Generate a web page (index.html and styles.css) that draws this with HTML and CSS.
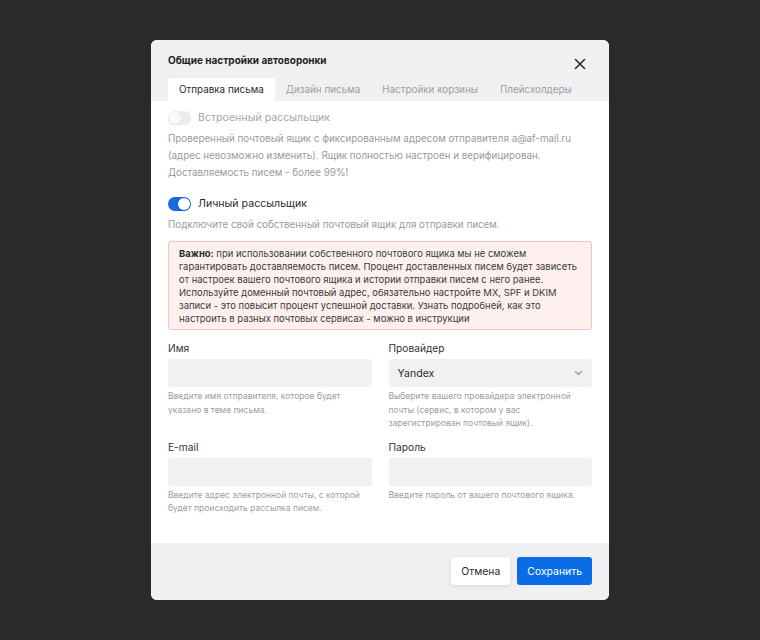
FILE: index.html
```html
<!DOCTYPE html>
<html lang="ru">
<head>
    <meta charset="UTF-8">
    <meta name="viewport" content="width=device-width, initial-scale=1.0">
    <title>Общие настройки автоворонки</title>
    <link rel="stylesheet" href="styles.css">
</head>
<body>
    <div class="modal">
        <header class="modal-header">
            <div class="title-row">
                <h1>Общие настройки автоворонки</h1>
                <button class="close" aria-label="Закрыть">
                    <svg width="12" height="12" viewBox="0 0 12 12"><path d="M1.5 1.5l9 9M10.5 1.5l-9 9" stroke="#2b2b2b" stroke-width="1.6" stroke-linecap="round"/></svg>
                </button>
            </div>
            <nav class="tabs">
                <a class="tab active" href="#">Отправка письма</a>
                <a class="tab" href="#">Дизайн письма</a>
                <a class="tab" href="#">Настройки корзины</a>
                <a class="tab" href="#">Плейсхолдеры</a>
            </nav>
        </header>

        <section class="modal-body">
            <div class="switch-row disabled">
                <span class="switch"><span class="knob"></span></span>
                <span>Встроенный рассыльщик</span>
            </div>
            <p class="desc">Проверенный почтовый ящик с фиксированным адресом отправителя a@af-mail.ru (адрес невозможно изменить). Ящик полностью настроен и верифицирован. Доставляемость писем - более 99%!</p>

            <div class="switch-row second">
                <span class="switch on"><span class="knob"></span></span>
                <span>Личный рассыльщик</span>
            </div>
            <p class="desc">Подключите свой собственный почтовый ящик для отправки писем.</p>

            <p class="warning"><b>Важно:</b> при использовании собственного почтового ящика мы не сможем гарантировать доставляемость писем. Процент доставленных писем будет зависеть от настроек вашего почтового ящика и истории отправки писем с него ранее. Используйте доменный почтовый адрес, обязательно настройте MX, SPF и DKIM записи - это повысит процент успешной доставки. Узнать подробней, как это настроить в разных почтовых сервисах - можно в инструкции</p>

            <div class="form-grid">
                <div class="field">
                    <label>Имя</label>
                    <input type="text">
                    <p class="hint">Введите имя отправителя, которое будет указано в теме письма.</p>
                </div>
                <div class="field">
                    <label>Провайдер</label>
                    <div class="select">
                        <span>Yandex</span>
                        <svg width="9" height="6" viewBox="0 0 9 6"><path d="M1.5 1.5l3 3 3-3" fill="none" stroke="#9a9a9a" stroke-width="1.4" stroke-linecap="round" stroke-linejoin="round"/></svg>
                    </div>
                    <p class="hint">Выберите вашего провайдера электронной почты (сервис, в котором у вас зарегистрирован почтовый ящик).</p>
                </div>
                <div class="field">
                    <label>E-mail</label>
                    <input type="text">
                    <p class="hint">Введите адрес электронной почты, с которой будет происходить рассылка писем.</p>
                </div>
                <div class="field">
                    <label>Пароль</label>
                    <input type="password">
                    <p class="hint">Введите пароль от вашего почтового ящика.</p>
                </div>
            </div>
        </section>

        <footer class="modal-footer">
            <button class="btn btn-light">Отмена</button>
            <button class="btn btn-primary">Сохранить</button>
        </footer>
    </div>
</body>
</html>
```

FILE: styles.css
```css
body {
    margin: 0;
    height: 640px;
    background-color: #2a2a2a;
    font-family: Inter, "Noto Sans", sans-serif;
    display: flex;
    align-items: center;
    justify-content: center;
}

.modal {
    width: 458px;
    height: 560px;
    background-color: #fff;
    border-radius: 6px;
    overflow: hidden;
    display: flex;
    flex-direction: column;
}

.modal-header {
    background-color: #f0f0f2;
    padding: 12px 17px 0;
}

.title-row {
    display: flex;
    justify-content: space-between;
    align-items: flex-start;
}

.title-row h1 {
    margin: 0;
    font-size: 10px;
    line-height: 16px;
    font-weight: 700;
    color: #1f1f1f;
}

.close {
    border: none;
    background: none;
    padding: 0;
    margin: 6px 6px 0 0;
    width: 12px;
    height: 12px;
    display: flex;
    cursor: pointer;
}

.tabs {
    display: flex;
    margin-top: 8px;
}

.tab {
    padding: 0 11px;
    height: 23px;
    line-height: 23px;
    font-size: 9.85px;
    white-space: nowrap;
    color: #9d9d9d;
    text-decoration: none;
    border-radius: 3px 3px 0 0;
}

.tab.active {
    background-color: #fff;
    color: #2b2b2b;
}

.modal-body {
    flex: 1;
    padding: 8px 17px 0;
}

.switch-row {
    display: flex;
    align-items: center;
    gap: 7px;
    font-size: 10.6px;
    line-height: 17px;
    color: #2b2b2b;
}

.switch-row.disabled {
    color: #a5a5a5;
}

.switch-row.second {
    margin-top: 14px;
}

.switch {
    width: 23px;
    height: 14px;
    border-radius: 7px;
    background-color: #ececec;
    position: relative;
    flex-shrink: 0;
}

.switch .knob {
    position: absolute;
    top: 1px;
    left: 1px;
    width: 12px;
    height: 12px;
    border-radius: 50%;
    background-color: #fafafa;
    box-shadow: 0 1px 2px rgba(0, 0, 0, 0.08);
}

.switch.on {
    background-color: #1769e0;
}

.switch.on .knob {
    left: 10px;
    background-color: #fff;
}

.desc {
    margin: 4px 0 0;
    font-size: 9.8px;
    line-height: 17px;
    color: #9a9a9a;
}

.warning {
    margin: 8px 0 0;
    padding: 5px 8px 4px 10px;
    background-color: #fdf0ef;
    border: 1.5px solid #f3c1bf;
    border-radius: 3px;
    font-size: 9.45px;
    line-height: 13px;
    color: #3b3b3b;
}

.warning b {
    font-weight: 700;
    color: #2b2b2b;
}

.form-grid {
    display: grid;
    grid-template-columns: 1fr 1fr;
    column-gap: 17px;
    row-gap: 8px;
    margin-top: 10px;
}

.field label {
    display: block;
    font-size: 10.2px;
    line-height: 16px;
    color: #333;
}

.field input,
.select {
    display: block;
    box-sizing: border-box;
    width: 100%;
    height: 28px;
    margin-top: 3px;
    border: none;
    border-radius: 3px;
    background-color: #f1f1f2;
    font-family: inherit;
    outline: none;
}

.select {
    display: flex;
    align-items: center;
    justify-content: space-between;
    padding: 0 9px 0 9px;
    font-size: 10.6px;
    color: #2b2b2b;
}

.hint {
    margin: 3px 0 0;
    font-size: 8.5px;
    line-height: 13.5px;
    color: #9d9d9d;
}

.modal-footer {
    background-color: #f0f0f2;
    height: 57px;
    box-sizing: border-box;
    padding: 14px 17px;
    display: flex;
    justify-content: flex-end;
    gap: 7px;
}

.btn {
    height: 28px;
    border: none;
    border-radius: 3px;
    font-family: inherit;
    font-size: 10.4px;
    padding: 0 10px;
    cursor: pointer;
}

.btn-light {
    background-color: #fff;
    color: #2b2b2b;
    box-shadow: 0 1px 4px rgba(0, 0, 0, 0.1);
}

.btn-primary {
    background-color: #0b6de6;
    color: #fff;
}
```
